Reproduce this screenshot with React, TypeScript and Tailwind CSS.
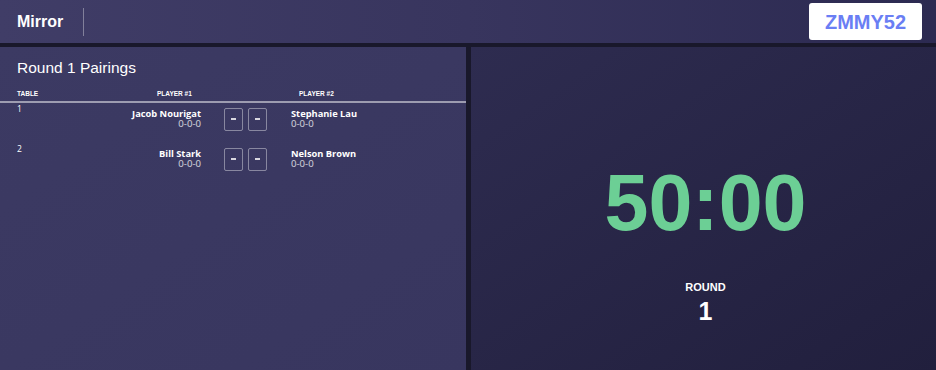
import React from 'react';

const pairings = [
  { table: 1, p1: 'Jacob Nourigat', r1: '0-0-0', p2: 'Stephanie Lau', r2: '0-0-0' },
  { table: 2, p1: 'Bill Stark', r1: '0-0-0', p2: 'Nelson Brown', r2: '0-0-0' },
];

const ResultBox = () => (
  <div className="w-[19px] h-[23px] rounded-[2px] border border-white/40 flex items-center justify-center">
    <span className="block w-[5px] h-[1.5px] bg-white/80"></span>
  </div>
);

export default function App() {
  return (
    <div className="w-[936px] h-[370px] flex flex-col bg-[#19182b] overflow-hidden font-['Liberation_Sans',Arial,sans-serif] text-white">
      {/* top bar */}
      <div className="h-[43px] flex items-center px-[17px] bg-gradient-to-r from-[#403d67] via-[#38355e] to-[#2c2a51]">
        <span className="text-[16px] font-bold leading-none">Mirror</span>
        <div className="ml-[20px] w-px h-[28px] bg-white/35"></div>
        <div className="ml-auto -mr-[3px] w-[113px] h-[37px] bg-white rounded-[3px] flex items-center justify-center">
          <span className="text-[20px] font-bold text-[#6a7ef4] leading-none">ZMMY52</span>
        </div>
      </div>

      <div className="flex-1 flex gap-[5px] pt-[4px]">
        {/* pairings */}
        <div className="w-[466px] bg-gradient-to-br from-[#3c3a63] to-[#38365f]">
          <h2 className="pl-[17px] pt-[12px] text-[15.5px] leading-[18px]">Round 1 Pairings</h2>
          <div className="mt-[14px] flex pl-[17px] pb-[3px] border-b-2 border-white/50 text-[6.5px] font-bold uppercase leading-none">
            <span className="w-[140px]">Table</span>
            <span className="w-[142px]">Player #1</span>
            <span>Player #2</span>
          </div>
          {pairings.map(p => (
            <div key={p.table} className="h-[40px] flex pl-[17px] pt-[5px] font-['Open_Sans',sans-serif]">
              <span className="w-[100px] -mt-[4px] text-[8.5px] leading-[10px]">{p.table}</span>
              <div className="w-[84px] text-right">
                <div className="text-[9.3px] font-bold leading-[11px]">{p.p1}</div>
                <div className="text-[9.6px] leading-[10px] text-white/80">{p.r1}</div>
              </div>
              <div className="ml-[23px] flex gap-[5px]">
                <ResultBox />
                <ResultBox />
              </div>
              <div className="ml-[24px]">
                <div className="text-[9.3px] font-bold leading-[11px]">{p.p2}</div>
                <div className="text-[9.6px] leading-[10px] text-white/80">{p.r2}</div>
              </div>
            </div>
          ))}
        </div>

        {/* timer */}
        <div className="flex-1 flex flex-col items-center pt-[116px] pl-[4px] bg-gradient-to-br from-[#2e2c50] to-[#211f3d]">
          <div className="text-[79px] font-bold leading-none text-[#6ccf95]">50:00</div>
          <div className="mt-[40px] text-[11px] font-bold leading-none">ROUND</div>
          <div className="mt-[6px] text-[25px] font-bold leading-none">1</div>
        </div>
      </div>
    </div>
  );
}
